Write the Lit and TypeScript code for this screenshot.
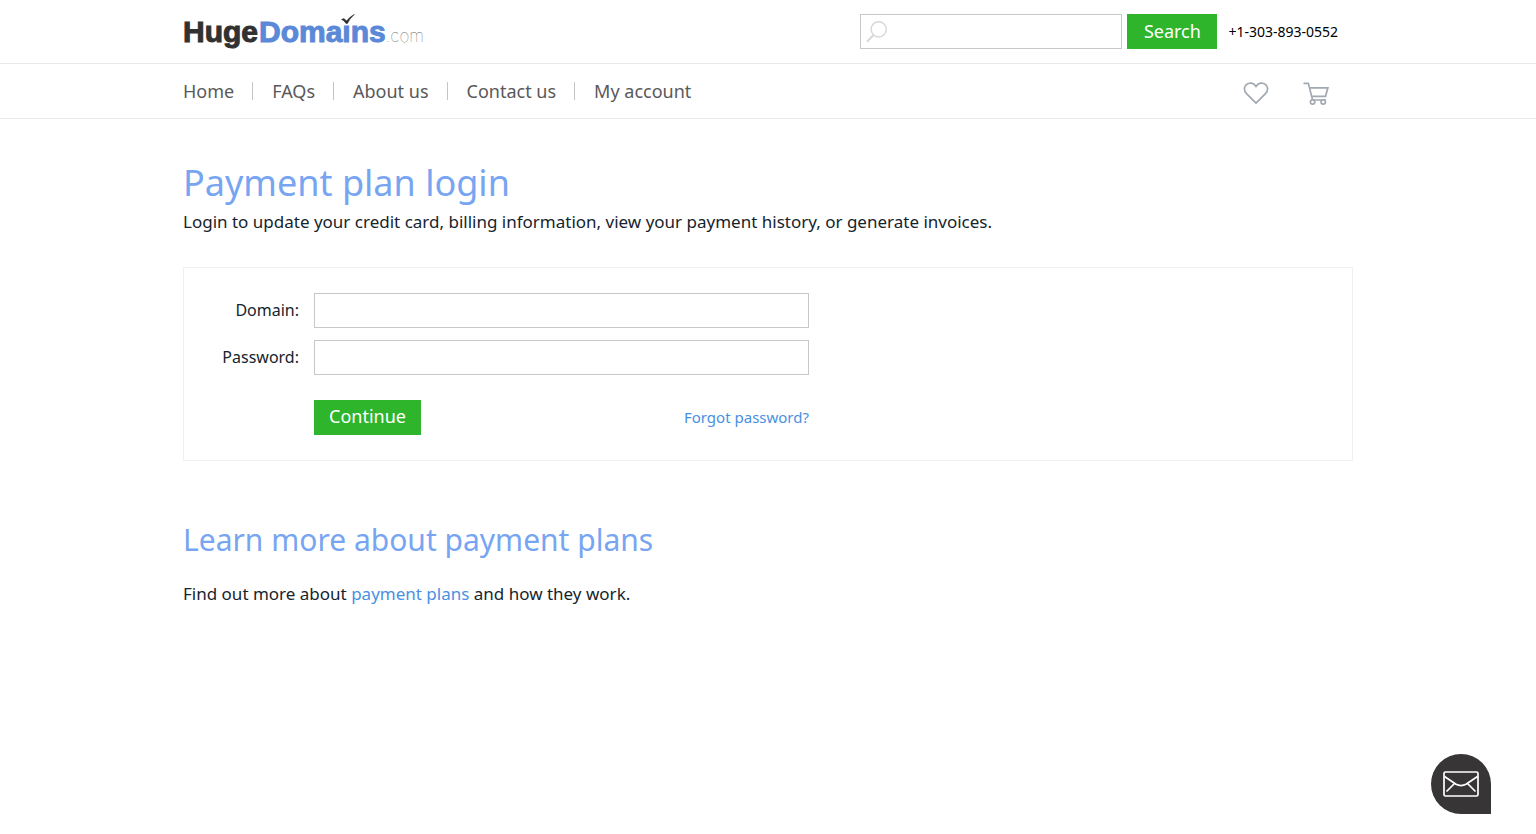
import { LitElement, html, css } from "lit";
import { customElement } from "lit/decorators.js";

const NAV_ITEMS = ["Home", "FAQs", "About us", "Contact us", "My account"];

@customElement("app-root")
export class AppRoot extends LitElement {
  static styles = css`
    :host {
      display: block;
      font-family: "Noto Sans", sans-serif;
      font-size: 17px;
      line-height: 24px;
      color: #15242d;
      background: #fff;
    }
    * {
      box-sizing: border-box;
    }
    a {
      color: #4a90e2;
      text-decoration: none;
    }
    .container {
      max-width: 1170px;
      margin: 0 auto;
    }
    .top,
    .nav {
      border-bottom: 1px solid #e8e9ea;
    }
    .bar {
      display: flex;
      align-items: center;
      justify-content: space-between;
    }
    .top .bar {
      height: 63px;
    }
    .nav .bar {
      height: 54px;
    }

    .logo {
      display: flex;
      align-items: baseline;
      padding-top: 4px;
      font-family: "Liberation Sans", sans-serif;
      font-size: 30px;
      line-height: 34px;
      font-weight: 700;
      color: #323132;
    }
    .logo .huge {
      -webkit-text-stroke: 1px #323132;
    }
    .logo .domains {
      padding-left: 1px;
      color: #5b89d8;
      -webkit-text-stroke: 1px #5b89d8;
    }
    .logo .letter {
      position: relative;
    }
    .logo .tick {
      position: absolute;
      left: -1px;
      top: -1px;
      width: 14px;
      height: 10px;
    }
    .logo .com {
      font-family: Inter, sans-serif;
      font-weight: 100;
      font-size: 17px;
      color: #666;
    }

    .tools {
      display: flex;
      align-items: center;
      padding-right: 15px;
    }
    .search {
      display: flex;
      gap: 5px;
    }
    .search-box {
      display: flex;
      align-items: center;
      width: 262px;
      height: 35px;
      padding-left: 5px;
      border: 1px solid #c8c8c8;
    }
    .search-box svg {
      flex: none;
      width: 22px;
      height: 24px;
    }
    .search-box input {
      flex: 1;
      min-width: 0;
      height: 100%;
      padding: 0 8px;
      border: 0;
      outline: 0;
      background: none;
      font: inherit;
    }
    .button {
      height: 35px;
      padding: 0 15px 2px;
      border: 0;
      background: #2eb52c;
      color: #fff;
      font: inherit;
      font-size: 18px;
      line-height: 33px;
      cursor: pointer;
    }
    .search .button {
      width: 90px;
      padding-bottom: 0;
    }
    .phone {
      margin-left: 11px;
      font-size: 14px;
      color: #000;
    }

    .links {
      display: flex;
      align-items: center;
      margin: 0;
      padding: 0;
      list-style: none;
    }
    .links li {
      display: flex;
      align-items: center;
    }
    .links li + li::before {
      content: "";
      width: 1px;
      height: 18px;
      margin: 0 19px 0 18px;
      background: #c4c4c4;
    }
    .links a {
      font-size: 18px;
      color: #595959;
    }
    .icons {
      display: flex;
      gap: 34px;
      padding: 4px 24px 0 0;
    }
    .icons a {
      display: flex;
    }
    .icons svg {
      width: 26px;
      height: 26px;
    }

    h1,
    h2 {
      margin: 0;
      font-weight: 400;
      color: #78a5f1;
    }
    h1 {
      padding-top: 40px;
      font-size: 36px;
      line-height: 48px;
    }
    h2 {
      padding-top: 58px;
      font-size: 30px;
      line-height: 42px;
    }
    p {
      margin: 0;
    }
    .intro {
      margin: 3px 0 33px;
    }
    .more {
      margin-top: 21px;
    }

    .panel {
      display: grid;
      grid-template-columns: 115px minmax(0, 495px);
      column-gap: 15px;
      row-gap: 12px;
      align-items: center;
      padding: 25px 15px 25px 0;
      border: 1px solid #f0f0f0;
    }
    .panel label {
      padding-bottom: 2px;
      font-size: 16px;
      text-align: right;
    }
    .panel input {
      width: 100%;
      height: 35px;
      padding: 0 10px;
      border: 1px solid #c8c8c8;
      font: inherit;
    }
    .actions {
      grid-column: 2;
      display: flex;
      align-items: center;
      justify-content: space-between;
      margin-top: 13px;
    }
    .actions a {
      padding-bottom: 2px;
      font-size: 15px;
    }

    .chat {
      position: fixed;
      right: 45px;
      bottom: 20px;
      display: flex;
      align-items: center;
      justify-content: center;
      width: 60px;
      height: 60px;
      padding: 0;
      border: 0;
      border-radius: 30px 30px 0 30px;
      background: #373535;
      cursor: pointer;
    }
    .chat svg {
      width: 36px;
      height: 26px;
    }
  `;

  render() {
    return html`
      <header>
        <div class="top">
          <div class="container bar">
            <a class="logo" href="#" aria-label="HugeDomains.com">
              <span class="huge">Huge</span
              ><span class="domains"
                >Doma<span class="letter"
                  >ı<svg class="tick" viewBox="0 0 14 10">
                    <path d="M.5 5.500 3 4.500 5.500 7Q9 2.500 13.500.3 8.700 4.500 6.400 9.500H5Q3.500 6.500.5 5.500Z" fill="#2b2b2b" stroke="#2b2b2b" stroke-width=".5" /></svg></span
                >ns</span
              ><span class="com">.com</span>
            </a>
            <div class="tools">
              <form class="search" @submit=${(e: Event) => e.preventDefault()}>
                <div class="search-box">
                  <svg viewBox="0 0 22 24" fill="none" stroke="#d8d8d8">
                    <circle cx="12.700" cy="9.300" r="7.600" stroke-width="1.500" />
                    <path d="M7.500 15 1 21.800" stroke-width="2" />
                  </svg>
                  <input type="text" aria-label="Search domains" />
                </div>
                <button class="button" type="submit">Search</button>
              </form>
              <a class="phone" href="tel:+13038930552">+1-303-893-0552</a>
            </div>
          </div>
        </div>
        <nav class="nav">
          <div class="container bar">
            <ul class="links">
              ${NAV_ITEMS.map((item) => html`<li><a href="#">${item}</a></li>`)}
            </ul>
            <div class="icons">
              <a href="#" aria-label="Favorites">
                <svg viewBox="0 0 26 26" fill="none" stroke="#a3a9b1" stroke-width="1.700" stroke-linejoin="round">
                  <path d="M13 23.200 3.500 13.700C.600 10.700.900 6.800 3.300 4.700 6.200 2.200 10.900 2.500 13 6.500 15.100 2.500 19.800 2.200 22.700 4.700 25.100 6.800 25.400 10.700 22.500 13.700Z" />
                </svg>
              </a>
              <a href="#" aria-label="Cart">
                <svg viewBox="0 0 26 26" fill="none" stroke="#a3a9b1" stroke-width="1.700">
                  <path d="M.5 3.300H5.300L9.600 20M6.200 7.800H24.900L22.500 16.300H8.600M9.600 20H23" />
                  <circle cx="9.600" cy="22" r="2.200" fill="#fff" />
                  <circle cx="20.200" cy="22" r="2.200" fill="#fff" />
                </svg>
              </a>
            </div>
          </div>
        </nav>
      </header>
      <main class="container">
        <h1>Payment plan login</h1>
        <p class="intro">
          Login to update your credit card, billing information, view your payment history, or generate invoices.
        </p>
        <form class="panel" @submit=${(e: Event) => e.preventDefault()}>
          <label for="domain">Domain:</label>
          <input id="domain" type="text" />
          <label for="password">Password:</label>
          <input id="password" type="password" />
          <div class="actions">
            <button class="button" type="submit">Continue</button>
            <a href="#">Forgot password?</a>
          </div>
        </form>
        <h2>Learn more about payment plans</h2>
        <p class="more">Find out more about <a href="#">payment plans</a> and how they work.</p>
      </main>
      <button class="chat" type="button" aria-label="Send a message">
        <svg viewBox="0 0 36 26" fill="none" stroke="#fff" stroke-width="1.700" stroke-linejoin="round">
          <rect x="1" y="1" width="34" height="24" rx="1.500" />
          <path d="M1.500 5.500 13 13.300Q18 15.800 23 13.300L34.500 5.500M11.500 12.500 3.500 20.500M24.500 12.500 32.500 20.500" />
        </svg>
      </button>
    `;
  }
}
